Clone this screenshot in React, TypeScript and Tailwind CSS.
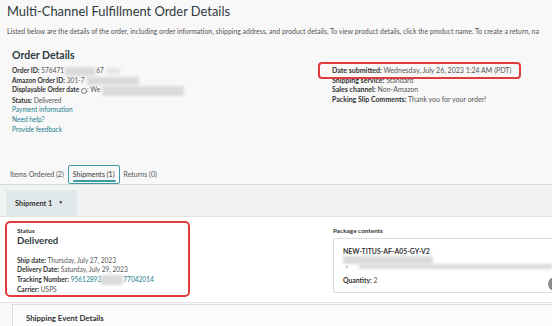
import React from "react";

const Blur = ({ w, h = 9, className = "" }: { w: number; h?: number; className?: string }) => (
  <span
    className={`inline-block align-middle bg-[#d9dadb] blur-[1.5px] ${className}`}
    style={{ width: w, height: h }}
  />
);

function Row({ label, children }: { label: string; children: React.ReactNode }) {
  return (
    <div className="whitespace-nowrap">
      <span className="font-bold text-[#333]">{label}:</span>{" "}
      <span className="text-[#555]">{children}</span>
    </div>
  );
}

export default function App() {
  return (
    <div className="w-[552px] h-[326px] overflow-hidden bg-[#f8f8f8] font-['Lato','Liberation_Sans',sans-serif] text-[#333] relative">
      {/* header */}
      <div className="pl-[7px] pt-[3px]">
        <h1 className="text-[12.9px] leading-[16px] text-[#2f3b40] whitespace-nowrap">
          Multi-Channel Fulfillment Order Details
        </h1>
        <p className="mt-[8px] text-[6.9px] leading-[8px] text-[#555] whitespace-nowrap overflow-hidden">
          Listed below are the details of the order, including order information, shipping address, and product details. To view
          product details, click the product name. To create a return, na
        </p>
      </div>

      {/* order details */}
      <div className="pl-[12px] mt-[14px]">
        <h2 className="text-[10.5px] leading-[12px] font-bold text-[#2f3b40]">Order Details</h2>
        <div className="flex mt-[5px] text-[6.6px] leading-[9.6px]">
          <div className="w-[320px] shrink-0">
            <div className="whitespace-nowrap">
              <span className="font-bold">Order ID:</span> <span className="text-[#555]">576471</span>
              <Blur w={30} className="mx-[1px]" />
              <span className="text-[#555]">67</span>
              <Blur w={14} h={6} className="ml-[2px] opacity-60" />
            </div>
            <div className="whitespace-nowrap">
              <span className="font-bold">Amazon Order ID:</span> <span className="text-[#555]">301-7</span>
              <Blur w={52} h={8} className="ml-[3px]" />
            </div>
            <div className="whitespace-nowrap">
              <span className="font-bold">Displayable Order date</span>{" "}
              <span className="inline-block w-[6px] h-[6px] rounded-full border border-[#777] align-middle" />
              <span className="text-[#555]">: We</span>
              <Blur w={82} h={10} className="ml-[2px]" />
            </div>
            <Row label="Status">Delivered</Row>
            <div className="text-[#1b7d8c]">Payment information</div>
            <div className="text-[#1b7d8c]">Need help?</div>
            <div className="text-[#1b7d8c]">Provide feedback</div>
          </div>
          <div className="text-[7px]">
            <div className="relative inline-block whitespace-nowrap">
              <span className="font-bold">Date submitted:</span>{" "}
              <span className="text-[#555]">Wednesday, July 26, 2023 1:24 AM (PDT)</span>
              <span className="absolute -left-[14px] -right-[10px] -top-[4px] -bottom-[3px] border-2 border-[#e23b3e] rounded-[4px]" />
            </div>
            <Row label="Shipping service">Standard</Row>
            <Row label="Sales channel">Non-Amazon</Row>
            <Row label="Packing Slip Comments">Thank you for your order!</Row>
          </div>
        </div>
      </div>

      {/* tabs */}
      <div className="mt-[31px] h-[20px] flex items-center pl-[10px] gap-[4px] border-b border-[#d5d9d9] text-[7px] text-[#555] whitespace-nowrap">
        <span>Items Ordered (2)</span>
        <div className="h-full flex flex-col justify-center px-[4px] border-[1.5px] border-[#3a9aa5] rounded-[2px] relative">
          <span className="text-[#333]">Shipments (1)</span>
          <span className="absolute left-[4px] right-[3px] bottom-[1px] h-[2px] bg-[#3a9aa5] rounded-full" />
        </div>
        <span>Returns (0)</span>
      </div>

      {/* shipment selector band */}
      <div className="h-[32px] bg-[#f1f2f2] border-b border-[#e0e2e2] pl-[6px] pt-[5px]">
        <div className="w-[71px] h-[26px] bg-[#e2e9ec] flex items-center pl-[9px] gap-[6px] text-[7.4px] font-bold text-[#333]">
          Shipment 1
          <span className="text-[5px]">▼</span>
        </div>
      </div>

      {/* shipment card */}
      <div className="bg-white h-[86px] border-b border-[#e3e3e3] pt-[4px] pl-[5px] flex">
        <div className="w-[185px] shrink-0 h-[76px] border-2 border-[#e23b3e] rounded-[5px] pl-[10px] pt-[4px]">
          <div className="text-[6.4px] leading-[8px] font-bold">Status</div>
          <div className="text-[9.6px] leading-[12px] font-bold text-[#2f3b40]">Delivered</div>
          <div className="mt-[9px] text-[6.6px] leading-[9.2px]">
            <Row label="Ship date">Thursday, July 27, 2023</Row>
            <Row label="Delivery Date">Saturday, July 29, 2023</Row>
            <div className="whitespace-nowrap">
              <span className="font-bold">Tracking Number:</span>{" "}
              <span className="text-[#1b7d8c]">95612893</span>
              <Blur w={22} h={10} />
              <span className="text-[#1b7d8c]">77042014</span>
            </div>
            <Row label="Carrier">USPS</Row>
          </div>
        </div>
        <div className="ml-[143px] pt-[6px] flex-1 min-w-0">
          <div className="text-[6.4px] leading-[8px] font-bold">Package contents</div>
          <div className="mt-[3px] h-[55px] border border-[#dcdcdc] rounded-l-[2px] border-r-0 pl-[9px] pt-[8px] text-[6.8px] leading-[8px] relative">
            <div className="font-bold text-[#333] text-[6.9px]">NEW-TITUS-AF-A05-GY-V2</div>
            <div className="mt-[1px] h-[7px] flex items-center">
              <Blur w={90} h={8} />
            </div>
            <div className="h-[7px] flex items-center">
              <span className="text-[#1b7d8c] text-[5px] pl-[3px] w-[17px]">r</span>
              <Blur w={200} h={5} className="bg-[#d4dde3]" />
            </div>
            <div className="mt-[6px]">
              <span className="font-bold">Quantity:</span> <span className="text-[#555]">2</span>
            </div>
            <span className="absolute -right-[10px] top-[38px] w-[14px] h-[14px] rounded-full bg-[#8a8a8a]" />
          </div>
        </div>
      </div>

      {/* shipping event details */}
      <div className="mt-[1px] ml-[12px] h-[40px] bg-[#fbfbfb] border-l border-t border-[#dcdcdc] pl-[13px] pt-[8px]">
        <div className="text-[7.8px] leading-[10px] font-bold text-[#333]">Shipping Event Details</div>
      </div>
    </div>
  );
}
